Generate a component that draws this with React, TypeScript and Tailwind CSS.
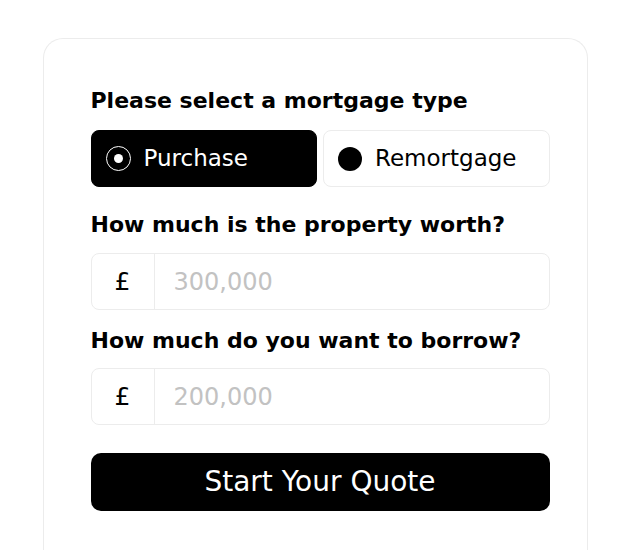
import { useState } from "react";

type Mode = "purchase" | "remortgage";

function MoneyInput({ placeholder }: { placeholder: string }) {
  return (
    <div className="flex h-[57px] rounded-lg border border-[#ececec] bg-white">
      <div className="flex w-[63px] shrink-0 items-center justify-center border-r border-[#ececec] text-[25px] text-black">
        £
      </div>
      <input
        className="min-w-0 flex-1 bg-transparent pl-[19px] text-[24px] text-black outline-none placeholder:text-[#c2c2c2]"
        placeholder={placeholder}
      />
    </div>
  );
}

function RadioOption({
  label,
  active,
  onClick,
}: {
  label: string;
  active: boolean;
  onClick: () => void;
}) {
  return (
    <button
      onClick={onClick}
      className={
        active
          ? "flex h-[57px] items-center gap-[13px] rounded-lg border border-black bg-black pl-[14px] text-[23px] text-white"
          : "flex h-[57px] items-center gap-[13px] rounded-lg border border-[#ececec] bg-white pl-[14px] text-[23px] text-black"
      }
    >
      {active ? (
        <span className="flex h-[25px] w-[25px] items-center justify-center rounded-full border-[1.5px] border-white">
          <span className="h-[9px] w-[9px] rounded-full bg-white" />
        </span>
      ) : (
        <span className="h-[24px] w-[24px] rounded-full bg-black" />
      )}
      {label}
    </button>
  );
}

export default function App() {
  const [mode, setMode] = useState<Mode>("purchase");

  return (
    <div
      className="min-h-[550px] bg-white pt-[38px]"
      style={{ fontFamily: "'DejaVu Sans', Verdana, sans-serif" }}
    >
      <div className="mx-auto h-[530px] w-[545px] rounded-t-[20px] border border-b-0 border-[#ececec] pt-[48px] pl-[47px] pr-[37px]">
        <h2 className="text-[22px] leading-[28px] font-bold text-black">
          Please select a mortgage type
        </h2>

        <div className="mt-[15px] grid grid-cols-2 gap-[6px]">
          <RadioOption
            label="Purchase"
            active={mode === "purchase"}
            onClick={() => setMode("purchase")}
          />
          <RadioOption
            label="Remortgage"
            active={mode === "remortgage"}
            onClick={() => setMode("remortgage")}
          />
        </div>

        <h2 className="mt-[24px] text-[22px] leading-[28px] font-bold text-black">
          How much is the property worth?
        </h2>
        <div className="mt-[14px]">
          <MoneyInput placeholder="300,000" />
        </div>

        <h2 className="mt-[17px] text-[22px] leading-[28px] font-bold text-black">
          How much do you want to borrow?
        </h2>
        <div className="mt-[13px]">
          <MoneyInput placeholder="200,000" />
        </div>

        <button className="mt-[28px] h-[58px] w-full rounded-[10px] bg-black text-[28px] text-white">
          Start Your Quote
        </button>
      </div>
    </div>
  );
}
